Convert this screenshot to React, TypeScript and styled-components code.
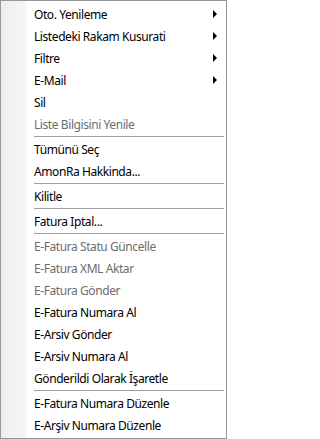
import React from 'react';
import styled, { createGlobalStyle } from 'styled-components';

const GlobalStyle = createGlobalStyle`
  html, body {
    margin: 0;
    padding: 0;
    background: #ffffff;
  }
`;

const Menu = styled.div`
  box-sizing: border-box;
  width: 227px;
  height: 439px;
  border: 1px solid #979797;
  background: #f0f0f0;
  padding: 2px 2px 2px 0;
  display: flex;
  flex-direction: column;
  font-family: "Noto Sans", "Open Sans", sans-serif;
  font-size: 12px;
  letter-spacing: -0.42px;
  color: #000;
  background-image: linear-gradient(to right, #eeeeee 0px, #f6f6f6 26px, #ffffff 26px);
`;

const Item = styled.div<{ disabled?: boolean }>`
  height: 22px;
  display: flex;
  align-items: center;
  padding-left: 33px;
  padding-right: 7px;
  color: ${p => (p.disabled ? '#6d6d6d' : '#000')};
  white-space: nowrap;
`;

const Label = styled.span`
  flex: 1;
`;

const Arrow = styled.span`
  width: 0;
  height: 0;
  border-top: 4px solid transparent;
  border-bottom: 4px solid transparent;
  border-left: 4px solid #000;
`;

const Separator = styled.div`
  height: 3px;
  display: flex;
  align-items: center;
  padding-left: 33px;

  &::after {
    content: '';
    flex: 1;
    height: 1px;
    background: #a0a0a0;
  }
`;

type Entry = { label?: string; disabled?: boolean; sub?: boolean; sep?: boolean };

const entries: Entry[] = [
  { label: 'Oto. Yenileme', sub: true },
  { label: 'Listedeki Rakam Kusurati', sub: true },
  { label: 'Filtre', sub: true },
  { label: 'E-Mail', sub: true },
  { label: 'Sil' },
  { label: 'Liste Bilgisini Yenile', disabled: true },
  { sep: true },
  { label: 'Tümünü Seç' },
  { label: 'AmonRa Hakkinda...' },
  { sep: true },
  { label: 'Kilitle' },
  { sep: true },
  { label: 'Fatura Iptal...' },
  { sep: true },
  { label: 'E-Fatura Statu Güncelle', disabled: true },
  { label: 'E-Fatura XML Aktar', disabled: true },
  { label: 'E-Fatura Gönder', disabled: true },
  { label: 'E-Fatura Numara Al' },
  { label: 'E-Arsiv Gönder' },
  { label: 'E-Arsiv Numara Al' },
  { label: 'Gönderildi Olarak İşaretle' },
  { sep: true },
  { label: 'E-Fatura Numara Düzenle' },
  { label: 'E-Arşiv Numara Düzenle' },
];

const App: React.FC = () => (
  <>
    <GlobalStyle />
    <Menu>
      {entries.map((e, i) =>
        e.sep ? (
          <Separator key={i} />
        ) : (
          <Item key={i} disabled={e.disabled}>
            <Label>{e.label}</Label>
            {e.sub && <Arrow />}
          </Item>
        )
      )}
    </Menu>
  </>
);

export default App;
